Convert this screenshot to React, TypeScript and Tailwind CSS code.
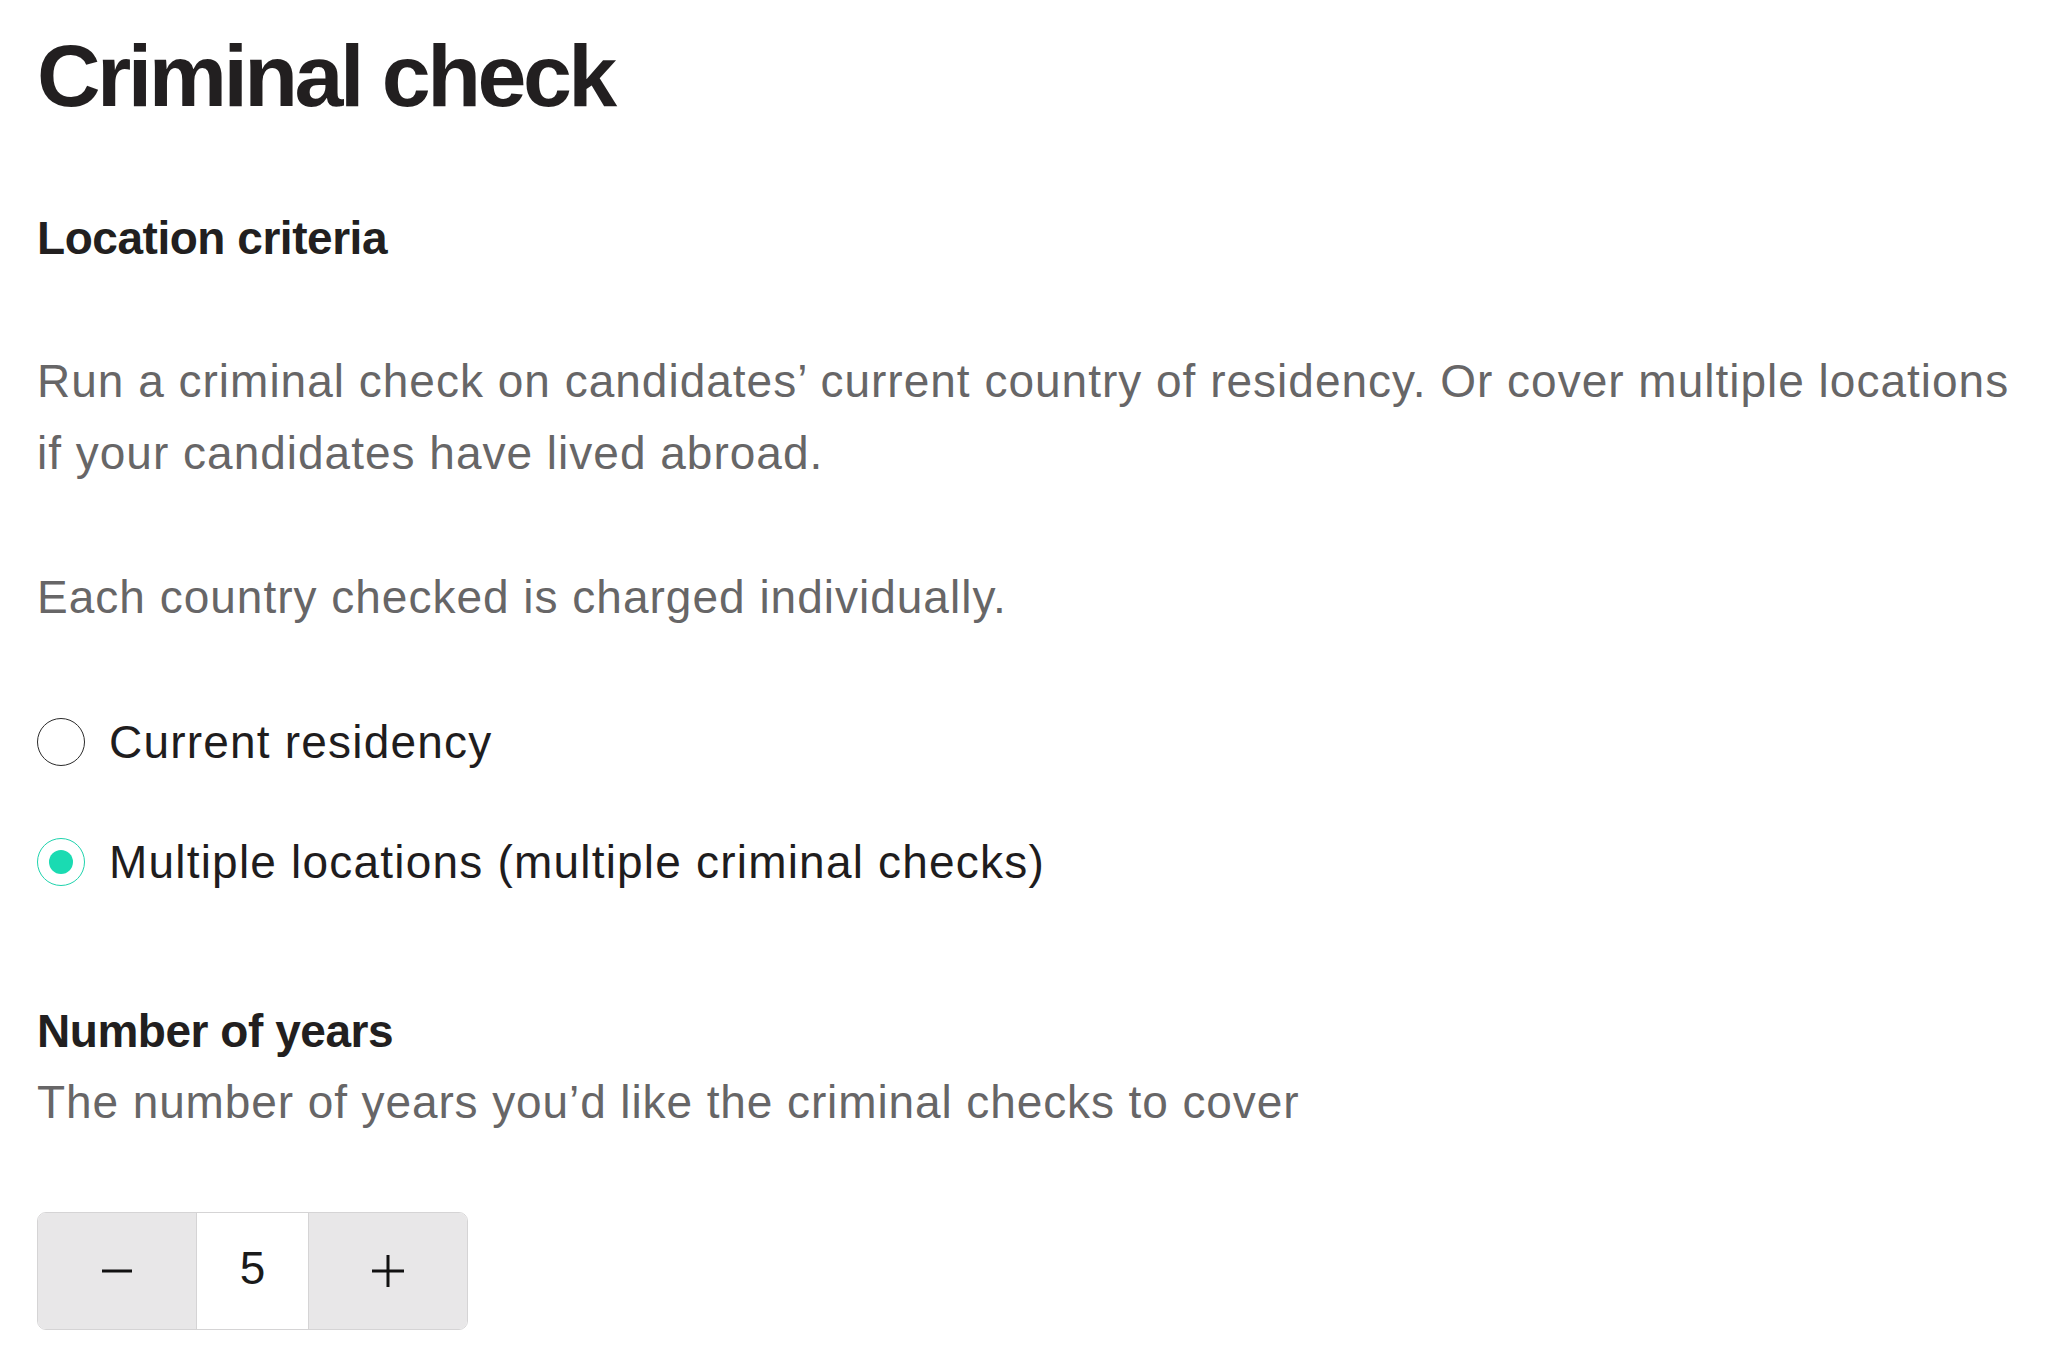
import React, { useState } from "react";

const FONT = { fontFamily: '"Liberation Sans", Arial, Helvetica, sans-serif' };

function Radio({ checked, label, onClick }: { checked: boolean; label: string; onClick: () => void }) {
  return (
    <button type="button" onClick={onClick} className="flex items-center h-[48px] text-left">
      {checked ? (
        <span className="flex items-center justify-center w-[48px] h-[48px] rounded-full border-[1.5px] border-[#1fd3ad] shrink-0">
          <span className="w-[24px] h-[24px] rounded-full bg-[#1adbb2]" />
        </span>
      ) : (
        <span className="w-[48px] h-[48px] rounded-full border-[1.5px] border-[#2b2b2b] shrink-0" />
      )}
      <span className="ml-[24px] text-[46px] leading-[48px] tracking-[1.2px] text-[#1f1d1e]">{label}</span>
    </button>
  );
}

export default function App() {
  const [mode, setMode] = useState<"current" | "multiple">("multiple");
  const [years, setYears] = useState(5);

  return (
    <div className="min-h-screen bg-white pl-[37px] pr-[20px] pt-[32px] pb-[30px]" style={FONT}>
      <h1 className="text-[88px] leading-[88px] font-bold tracking-[-0.04em] text-[#221f20]">Criminal check</h1>

      <h2 className="mt-[90px] text-[46px] leading-[56px] font-bold tracking-[-0.01em] text-[#221f20]">
        Location criteria
      </h2>

      <p className="mt-[79px] text-[46px] leading-[72px] tracking-[1px] text-[#676667]">
        Run a criminal check on candidates’ current country of residency. Or cover multiple locations if your
        candidates have lived abroad.
      </p>
      <p className="mt-[72px] text-[46px] leading-[72px] tracking-[1px] text-[#676667]">
        Each country checked is charged individually.
      </p>

      <div className="mt-[85px] flex flex-col gap-[72px]">
        <Radio checked={mode === "current"} label="Current residency" onClick={() => setMode("current")} />
        <Radio
          checked={mode === "multiple"}
          label="Multiple locations (multiple criminal checks)"
          onClick={() => setMode("multiple")}
        />
      </div>

      <h2 className="mt-[117px] text-[46px] leading-[56px] font-bold tracking-[-0.01em] text-[#221f20]">
        Number of years
      </h2>
      <p className="mt-[7px] text-[46px] leading-[72px] tracking-[0.9px] text-[#676667]">
        The number of years you’d like the criminal checks to cover
      </p>

      <div className="mt-[74px] flex h-[118px] w-[431px] rounded-[9px] border-[1.5px] border-[#d5d4d5] overflow-hidden">
        <button
          type="button"
          onClick={() => setYears((y) => Math.max(1, y - 1))}
          className="flex items-center justify-center w-[158px] bg-[#e8e7e8]"
        >
          <svg width="30" height="4" viewBox="0 0 30 4">
            <line x1="0" y1="2" x2="30" y2="2" stroke="#111" strokeWidth="3" />
          </svg>
        </button>
        <div className="flex items-center justify-center w-[113px] pb-[6px] bg-white border-x-[1.5px] border-[#d5d4d5] text-[46px] text-[#1a1a1a]">
          {years}
        </div>
        <button
          type="button"
          onClick={() => setYears((y) => y + 1)}
          className="flex items-center justify-center flex-1 bg-[#e8e7e8]"
        >
          <svg width="32" height="32" viewBox="0 0 32 32">
            <line x1="0" y1="16" x2="32" y2="16" stroke="#111" strokeWidth="3" />
            <line x1="16" y1="0" x2="16" y2="32" stroke="#111" strokeWidth="3" />
          </svg>
        </button>
      </div>
    </div>
  );
}
